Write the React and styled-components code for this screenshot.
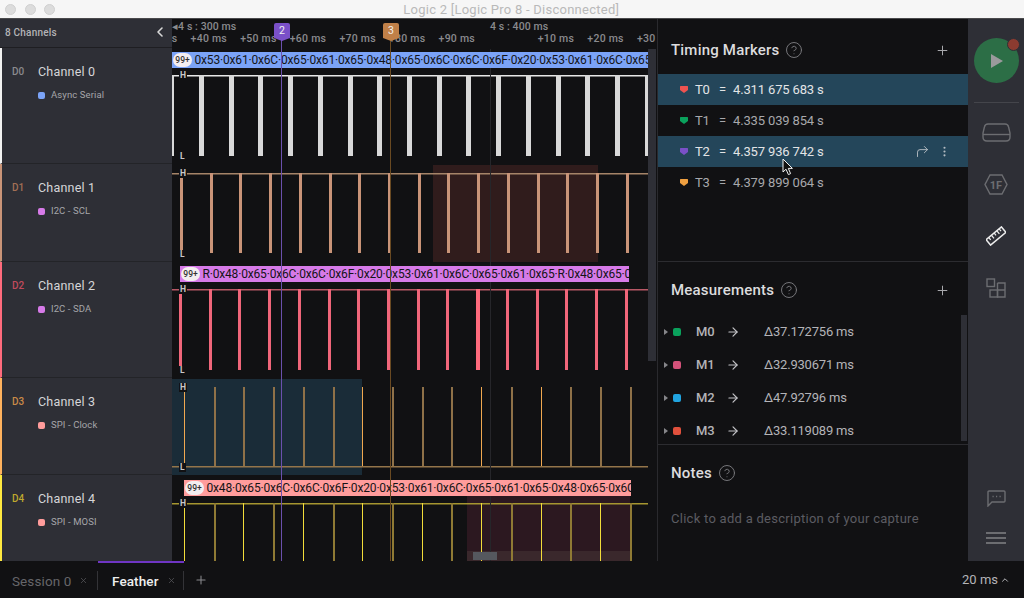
import React from 'react';
import styled, { createGlobalStyle } from 'styled-components';
import { ArrowRight, ChevronLeft, ChevronUp, CircleHelp, CornerUpRight, EllipsisVertical, Plus, X } from 'lucide-react';

const GlobalStyle = createGlobalStyle`
  html, body {
    margin: 0;
    padding: 0;
    background: #111113;
    overflow: hidden;
  }
  * {
    box-sizing: border-box;
  }
`;

const Window = styled.div`
  width: 1024px;
  height: 598px;
  display: flex;
  flex-direction: column;
  font-family: Roboto, "Liberation Sans", sans-serif;
  color: #d6d6d6;
  background: #111113;
  overflow: hidden;
`;

// Title bar
const TitleBar = styled.div`
  height: 19px;
  flex: none;
  background: #f6f6f6;
  border-bottom: 1px solid #4a4a4c;
  display: flex;
  align-items: center;
  padding-left: 5px;
  position: relative;
`;

const TrafficLight = styled.span`
  width: 11px;
  height: 11px;
  margin-right: 8.5px;
  border-radius: 50%;
  background: #dcdcdc;
  border: 1px solid #d0d0d0;
`;

const WindowTitle = styled.div`
  flex: 1;
  padding-right: 65px;
  text-align: center;
  font-size: 13px;
  letter-spacing: 0.25px;
  color: #b9b9b9;
`;

const Main = styled.div`
  flex: 1;
  display: flex;
  min-height: 0;
`;

// Channel column
const ChannelColumn = styled.div`
  width: 172px;
  flex: none;
  display: flex;
  flex-direction: column;
  background: #2e2f36;
`;

const ChannelHeader = styled.div`
  height: 29px;
  flex: none;
  display: flex;
  align-items: center;
  justify-content: space-between;
  padding: 0 4px 2px 5px;
  font-size: 10px;
  font-weight: 500;
  letter-spacing: 0.2px;
  color: #b4b4b6;
  border-bottom: 1px solid #1e1e22;
`;

const ChannelRow = styled.div`
  height: ${({ $height }) => $height}px;
  flex: none;
  border-left: 2px solid ${({ $color }) => $color};
  border-bottom: 1px solid #232428;
  display: grid;
  grid-template-columns: 26px 1fr;
  grid-template-rows: auto auto;
  align-content: start;
  padding: 16px 0 0 10px;
`;

const ChannelTag = styled.span`
  font-size: 10px;
  font-weight: 500;
  line-height: 16px;
  color: ${({ $color }) => $color};
`;

const ChannelName = styled.span`
  font-size: 12.5px;
  line-height: 16px;
  letter-spacing: 0.2px;
  color: #d6d6d8;
`;

const AnalyzerLabel = styled.div`
  grid-column: 2;
  margin-top: 9px;
  display: flex;
  align-items: center;
  gap: 6px;
  font-size: 9.5px;
  line-height: 12px;
  letter-spacing: 0.1px;
  color: #a6a6aa;
`;

const AnalyzerDot = styled.span`
  width: 7px;
  height: 7px;
  border-radius: 2px;
  background: ${({ $color }) => $color};
`;

// Waveform area
const Timeline = styled.div`
  width: 485px;
  flex: none;
  display: flex;
  flex-direction: column;
  position: relative;
  overflow: hidden;
  background: #111113;
`;

const Ruler = styled.div`
  height: 29px;
  flex: none;
  padding-top: 1px;
  overflow: hidden;
  font-size: 10.5px;
  font-weight: 500;
  color: #8a8a8e;
`;

const RulerMajor = styled.div`
  height: 12px;
  line-height: 14px;
  display: flex;
  white-space: nowrap;
  letter-spacing: 0.1px;
`;

const MajorLabel = styled.span`
  width: 318px;
  flex: none;
`;

const RulerMinor = styled.div`
  height: 13px;
  line-height: 13px;
  margin-left: -31px;
  display: flex;
  white-space: nowrap;
  letter-spacing: 0.25px;
`;

const Tick = styled.span`
  width: 49.6px;
  flex: none;
`;

const Lane = styled.div`
  height: ${({ $height }) => $height}px;
  flex: none;
  position: relative;
  padding-top: ${({ $barTop }) => $barTop}px;
  padding-left: ${({ $barLeft }) => $barLeft}px;
`;

const DecoderBar = styled.div`
  width: ${({ $width }) => $width}px;
  height: 16px;
  display: flex;
  align-items: center;
  gap: 2.5px;
  overflow: hidden;
  position: relative;
  z-index: 1;
  white-space: nowrap;
  background: ${({ $color }) => $color};
  color: #141416;
  font-size: 12px;
  letter-spacing: -0.17px;
  padding-left: 1px;
`;

const CountBadge = styled.span`
  flex: none;
  width: 19px;
  height: 14px;
  border-radius: 7px;
  background: #f4eef0;
  font-size: 8.5px;
  font-weight: 500;
  letter-spacing: 0;
  line-height: 14px;
  text-align: center;
  color: #333;
`;

const WaveCanvas = styled.svg`
  position: absolute;
  top: 0;
  left: 0;
`;

const LevelMark = styled.span`
  position: absolute;
  left: 7px;
  top: ${({ $top }) => $top}px;
  padding: 0 1px;
  background: #111113;
  color: #c8c8c8;
  font-size: 8.5px;
  font-weight: 700;
  line-height: 9px;
`;

const MarkerLine = styled.div`
  position: absolute;
  top: 20px;
  bottom: 0;
  left: ${({ $left }) => $left}px;
  width: 1px;
  background: ${({ $color }) => $color};
  z-index: 3;
`;

const MarkerFlag = styled.div`
  position: absolute;
  top: 4px;
  left: ${({ $left }) => $left}px;
  width: 16px;
  height: 15px;
  border-radius: 2px 2px 0 0;
  background: ${({ $color }) => $color};
  color: #f0f0f0;
  font-size: 10.5px;
  line-height: 15px;
  text-align: center;
  z-index: 4;
  &::after {
    content: '';
    position: absolute;
    top: 15px;
    left: 0;
    border-left: 8px solid transparent;
    border-right: 8px solid transparent;
    border-top: 3px solid ${({ $color }) => $color};
  }
`;

const GridLine = styled.div`
  position: absolute;
  top: 30px;
  bottom: 0;
  left: 318px;
  width: 1px;
  background: #26262a;
`;

const WaveScrollbar = styled.div`
  position: absolute;
  left: 476px;
  top: 30px;
  width: 8px;
  height: 312px;
  background: #2e2f36;
  z-index: 2;
`;

const ScrollThumb = styled.div`
  position: absolute;
  left: 301px;
  bottom: 1px;
  width: 24px;
  height: 8px;
  background: #55585e;
  z-index: 2;
`;

// Side panel
const SidePanel = styled.div`
  width: 311px;
  flex: none;
  border-left: 1px solid #2a2a2e;
  display: flex;
  flex-direction: column;
  position: relative;
`;

const PanelSection = styled.section`
  height: ${({ $height }) => ($height ? `${$height}px` : 'auto')};
  flex: ${({ $height }) => ($height ? 'none' : '1')};
  border-bottom: ${({ $height }) => ($height ? '1px solid #2c2c30' : 'none')};
  overflow: hidden;
  position: relative;
`;

const SectionHeader = styled.div`
  height: ${({ $height }) => $height}px;
  display: flex;
  align-items: center;
  gap: 6px;
  padding: ${({ $pad }) => $pad}px 18px 0 13px;
  font-size: 15px;
  font-weight: 500;
  letter-spacing: 0.2px;
  color: #dcdcde;
`;

const HeaderAction = styled.span`
  margin-left: auto;
  display: flex;
  color: #a8a8ac;
`;

const HelpIcon = styled(CircleHelp)`
  color: #77777b;
`;

const MarkerRow = styled.div`
  height: 31px;
  display: flex;
  align-items: center;
  padding: 1px 17px 0 22px;
  font-size: 13px;
  letter-spacing: -0.15px;
  background: ${({ $active }) => ($active ? '#24465a' : 'transparent')};
  color: ${({ $active }) => ($active ? '#e2e4e6' : '#a8a8ac')};
  border-bottom: 1px solid ${({ $active }) => ($active ? '#24465a' : '#111113')};
`;

const MarkerName = styled.span`
  width: 24px;
  margin-left: 7px;
`;

const MarkerEquals = styled.span`
  width: 14px;
`;

const RowActions = styled.span`
  margin-left: auto;
  display: flex;
  align-items: center;
  gap: 8px;
  color: #b4bcc2;
`;

const MeasurementRow = styled.div`
  height: 33px;
  display: flex;
  align-items: center;
  padding-left: 6px;
  font-size: 13px;
  letter-spacing: -0.2px;
  color: #b4b4b8;
`;

const Caret = styled.span`
  width: 0;
  height: 0;
  border-top: 3px solid transparent;
  border-bottom: 3px solid transparent;
  border-left: 4px solid #86868a;
  margin-right: 5px;
`;

const MeasurementSwatch = styled.span`
  width: 8px;
  height: 8px;
  border-radius: 2px;
  background: ${({ $color }) => $color};
  margin-right: 15px;
`;

const MeasurementName = styled.span`
  width: 30px;
  font-weight: 500;
`;

const MeasurementArrow = styled(ArrowRight)`
  width: 14px;
  height: 14px;
  margin-right: 24px;
  color: #c4c4c8;
`;

const PanelScrollbar = styled.div`
  position: absolute;
  right: 1px;
  top: 53px;
  width: 6px;
  height: 126px;
  background: #2e2f36;
`;

const NotesHint = styled.div`
  padding: 10px 13px;
  font-size: 13px;
  line-height: 15px;
  letter-spacing: 0.27px;
  color: #5c5c62;
`;

const Cursor = styled.svg`
  position: absolute;
  left: 124px;
  top: 139px;
  z-index: 5;
`;

// Right rail
const Rail = styled.div`
  flex: 1;
  background: #2e2f36;
  display: flex;
  flex-direction: column;
  align-items: center;
  padding-top: 19px;
`;

const CaptureButton = styled.div`
  width: 45px;
  height: 45px;
  border-radius: 50%;
  background: #2c6e46;
  display: flex;
  align-items: center;
  justify-content: center;
  position: relative;
  flex: none;
`;

const RecordDot = styled.span`
  position: absolute;
  top: 0;
  right: -1px;
  width: 13px;
  height: 13px;
  border-radius: 50%;
  background: #8b3b30;
  border: 1px solid #2e2f36;
`;

const RailDivider = styled.div`
  width: 45px;
  height: 1px;
  margin: 19px 0 3px;
  background: #44454b;
  flex: none;
`;

const RailButton = styled.div`
  height: 52px;
  width: 100%;
  flex: none;
  display: flex;
  align-items: center;
  justify-content: center;
  color: ${({ $active }) => ($active ? '#ececec' : '#6c6d71')};
`;

const RailSpacer = styled.div`
  flex: 1;
`;

const RailFooterButton = styled.div`
  height: 39px;
  flex: none;
  display: flex;
  align-items: center;
  justify-content: center;
  color: #6c6d71;
`;

const RailBottomGap = styled.div`
  height: 4px;
  flex: none;
`;

// Bottom tabs
const TabBar = styled.div`
  height: 37px;
  flex: none;
  display: flex;
  align-items: center;
  background: #111113;
  font-size: 13px;
`;

const Tab = styled.div`
  height: 100%;
  width: ${({ $width }) => $width}px;
  display: flex;
  align-items: center;
  padding-left: ${({ $pad }) => $pad}px;
  gap: 8px;
  font-size: 13.5px;
  letter-spacing: 0.1px;
  color: ${({ $active }) => ($active ? '#eeeeee' : '#66666a')};
  font-weight: ${({ $active }) => ($active ? 500 : 400)};
  position: relative;
  border-top: 2px solid ${({ $active }) => ($active ? '#6f35c4' : 'transparent')};
  &::after {
    content: '';
    position: absolute;
    right: 0;
    top: 8px;
    height: 19px;
    width: 1px;
    background: #333337;
  }
`;

const TabClose = styled(X)`
  color: #55555a;
`;

const AddTab = styled(Plus)`
  margin-left: 10px;
  color: #8a8a8e;
`;

const Resolution = styled.div`
  margin-left: auto;
  padding-right: 14px;
  display: flex;
  align-items: center;
  gap: 2px;
  color: #b4b4b8;
`;

const pulses = (start, count, step = 29.72) =>
  Array.from({ length: count }, (_, i) => start + i * step);

const channels = [
  { id: 'D0', name: 'Channel 0', strip: '#f2f2f2', tag: '#8a8a8e', analyzer: 'Async Serial', dot: '#7ba3f7', height: 116 },
  { id: 'D1', name: 'Channel 1', strip: '#c99478', tag: '#a36f55', analyzer: 'I2C - SCL', dot: '#d67ae8', height: 98 },
  { id: 'D2', name: 'Channel 2', strip: '#ff6b7d', tag: '#c04a5c', analyzer: 'I2C - SDA', dot: '#d67ae8', height: 116 },
  { id: 'D3', name: 'Channel 3', strip: '#ffb25e', tag: '#c98a48', analyzer: 'SPI - Clock', dot: '#ff9c9c', height: 97 },
  { id: 'D4', name: 'Channel 4', strip: '#ffe940', tag: '#bfa82e', analyzer: 'SPI - MOSI', dot: '#ff9c9c', height: 87 },
];

const serialText = '0x53·0x61·0x6C·0x65·0x61·0x65·0x48·0x65·0x6C·0x6C·0x6F·0x20·0x53·0x61·0x6C·0x65·0x61';
const i2cText = 'R·0x48·0x65·0x6C·0x6C·0x6F·0x20·0x53·0x61·0x6C·0x65·0x61·0x65·R·0x48·0x65·0x6C';
const spiText = '0x48·0x65·0x6C·0x6C·0x6F·0x20·0x53·0x61·0x6C·0x65·0x61·0x65·0x48·0x65·0x6C';

// Waveform drawing for each lane, coordinates are local to the lane
const LaneWave = ({ height, level, low, edges, width, color, lineColor, regions = [], brightAt = [], brightColor, brightWidth, firstWidth }) => (
  <WaveCanvas width="485" height={height}>
    {regions.map((region) => (
      <rect key={region.y} x={region.x} y={region.y} width={region.w} height={region.h} fill={region.fill} />
    ))}
    <rect x="0" y={level} width="476" height="1.5" fill={lineColor} />
    {edges.map((x, i) => {
      const bright = brightAt.includes(i);
      const edgeWidth = i === 0 && firstWidth ? firstWidth : bright && brightWidth ? brightWidth : width;
      return (
        <rect
          key={x}
          x={Math.round(x)}
          y={Math.min(level, low)}
          width={edgeWidth}
          height={Math.abs(low - level)}
          fill={bright ? brightColor : color}
        />
      );
    })}
  </WaveCanvas>
);

const MarkerShield = ({ color }) => (
  <svg width="8" height="7" viewBox="0 0 8 7">
    <path d="M0 0.5 Q0 0 0.5 0 H7.5 Q8 0 8 0.5 V4 L4 7 L0 4 Z" fill={color} />
  </svg>
);

const DeviceIcon = () => (
  <svg width="29" height="19" viewBox="0 0 29 19" fill="none" stroke="currentColor" strokeWidth="1.4">
    <path d="M6 1 H23 Q26 1 26.6 4 L28 10 V14 Q28 18 24 18 H5 Q1 18 1 14 V10 L2.4 4 Q3 1 6 1 Z" />
    <path d="M1 11.5 H28" />
  </svg>
);

const FilterIcon = () => (
  <svg width="24" height="21" viewBox="0 0 24 21" fill="none" stroke="currentColor" strokeWidth="1.4">
    <path d="M6 1 H18 L23 10.5 L18 20 H6 L1 10.5 Z" />
    <text x="12" y="14.5" fontSize="11" fontWeight="700" textAnchor="middle" fill="currentColor" stroke="none" fontFamily="Roboto, sans-serif">1F</text>
  </svg>
);

const RulerIcon = () => (
  <svg width="20" height="20" viewBox="0 0 20 20" fill="none" stroke="currentColor" strokeWidth="1.5">
    <g transform="rotate(-40 10 10)">
      <rect x="0" y="6.5" width="20" height="7" />
      <path d="M3.5 6.5 V9.5 M7 6.5 V10.5 M10.5 6.5 V9.5 M14 6.5 V10.5 M17 6.5 V9.5" strokeWidth="1.2" />
    </g>
  </svg>
);

const LayoutIcon = () => (
  <svg width="20" height="20" viewBox="0 0 20 20" fill="none" stroke="currentColor" strokeWidth="1.4">
    <rect x="1" y="1" width="7.5" height="7.5" />
    <rect x="4" y="12" width="7.5" height="7" />
    <path d="M11.5 5 H19 V19 H11.5 V5 M11.5 12 H19" />
  </svg>
);

const ChatIcon = () => (
  <svg width="19" height="17" viewBox="0 0 19 17" fill="none" stroke="currentColor" strokeWidth="1.4">
    <path d="M2 1 H17 Q18 1 18 2 V11 Q18 12 17 12 H5 L1 16 V2 Q1 1 2 1 Z" />
    <path d="M5.5 6.5 H6.7 M9 6.5 H10.2 M12.5 6.5 H13.7" strokeWidth="1.6" />
  </svg>
);

const MenuIcon = () => (
  <svg width="20" height="12" viewBox="0 0 20 12" fill="currentColor">
    <rect y="0" width="20" height="2" />
    <rect y="5" width="20" height="2" />
    <rect y="10" width="20" height="2" />
  </svg>
);

const App = () => (
  <Window>
    <GlobalStyle />
    <TitleBar>
      <TrafficLight />
      <TrafficLight />
      <TrafficLight />
      <WindowTitle>Logic 2 [Logic Pro 8 - Disconnected]</WindowTitle>
    </TitleBar>

    <Main>
      <ChannelColumn>
        <ChannelHeader>
          8 Channels
          <ChevronLeft size={16} color="#d8d8d8" strokeWidth={2.4} />
        </ChannelHeader>
        {channels.map((channel) => (
          <ChannelRow key={channel.id} $height={channel.height} $color={channel.strip}>
            <ChannelTag $color={channel.tag}>{channel.id}</ChannelTag>
            <ChannelName>{channel.name}</ChannelName>
            <AnalyzerLabel>
              <AnalyzerDot $color={channel.dot} />
              {channel.analyzer}
            </AnalyzerLabel>
          </ChannelRow>
        ))}
      </ChannelColumn>

      <Timeline>
        <Ruler>
          <RulerMajor>
            <MajorLabel>◂4 s : 300 ms</MajorLabel>
            <span>4 s : 400 ms</span>
          </RulerMajor>
          <RulerMinor>
            {['+30 ms', '+40 ms', '+50 ms', '+60 ms', '+70 ms', '+80 ms', '+90 ms', '', '+10 ms', '+20 ms', '+30 ms'].map((label, i) => (
              <Tick key={i}>{label}</Tick>
            ))}
          </RulerMinor>
        </Ruler>

        <Lane $height={116} $barTop={4} $barLeft={0}>
          <LaneWave
            height={116}
            level={27}
            low={108}
            edges={[0, ...pulses(27, 16)]}
            width={5}
            firstWidth={2}
            color="#d9d9d9"
            lineColor="#e8e8e8"
          />
          <LevelMark $top={23}>H</LevelMark>
          <LevelMark $top={104}>L</LevelMark>
          <DecoderBar $width={476} $color="#7ba3f7">
            <CountBadge>99+</CountBadge>
            {serialText}
          </DecoderBar>
        </Lane>

        <Lane $height={98}>
          <LaneWave
            height={98}
            level={9}
            low={89}
            edges={pulses(8, 16)}
            width={3}
            color="#c99478"
            lineColor="#a58468"
            regions={[{ x: 261, y: 1, w: 165, h: 97, fill: '#301c1c' }]}
          />
          <LevelMark $top={5}>H</LevelMark>
          <LevelMark $top={86}>L</LevelMark>
        </Lane>

        <Lane $height={116} $barTop={4} $barLeft={8}>
          <LaneWave
            height={116}
            level={27}
            low={108}
            edges={pulses(7, 16)}
            width={3}
            color="#f0667a"
            lineColor="#b85866"
            brightAt={[10]}
            brightColor="#ff6b7d"
            brightWidth={4}
          />
          <LevelMark $top={23}>H</LevelMark>
          <LevelMark $top={104}>L</LevelMark>
          <DecoderBar $width={449} $color="#d67ae8">
            <CountBadge>99+</CountBadge>
            {i2cText}
          </DecoderBar>
        </Lane>

        <Lane $height={97}>
          <LaneWave
            height={97}
            level={88}
            low={9}
            edges={pulses(12, 16)}
            width={2}
            color="#8f7148"
            lineColor="#94754a"
            brightAt={[0, 6, 10, 12]}
            brightColor="#f0a850"
            brightWidth={1}
            regions={[{ x: 0, y: 1, w: 190, h: 96, fill: '#1a2c38' }]}
          />
          <LevelMark $top={5}>H</LevelMark>
          <LevelMark $top={85}>L</LevelMark>
        </Lane>

        <Lane $height={86} $barTop={5} $barLeft={12}>
          <LaneWave
            height={86}
            level={28}
            low={86}
            edges={pulses(12, 16)}
            width={2}
            color="#8f7a34"
            lineColor="#a69630"
            brightAt={[0, 2, 4, 6, 8, 10, 12, 14]}
            brightColor="#f2dc3a"
            brightWidth={1}
            regions={[
              { x: 295, y: 20, w: 163, h: 56, fill: '#2c1820' },
              { x: 295, y: 76, w: 163, h: 10, fill: '#3a282c' },
            ]}
          />
          <LevelMark $top={24}>H</LevelMark>
          <DecoderBar $width={447} $color="#ff9c9c">
            <CountBadge>99+</CountBadge>
            {spiText}
          </DecoderBar>
          <ScrollThumb />
        </Lane>

        <GridLine />
        <WaveScrollbar />
        <MarkerLine $left={109} $color="#6b50ad" />
        <MarkerLine $left={218} $color="#6a4a22" />
        <MarkerFlag $left={102} $color="#7a50c8">2</MarkerFlag>
        <MarkerFlag $left={211} $color="#c08048">3</MarkerFlag>
      </Timeline>

      <SidePanel>
        <PanelSection $height={243}>
          <SectionHeader $height={55} $pad={7}>
            Timing Markers
            <HelpIcon size={18} strokeWidth={1.3} />
            <HeaderAction><Plus size={15} strokeWidth={1.6} /></HeaderAction>
          </SectionHeader>
          <MarkerRow $active>
            <MarkerShield color="#ef5350" />
            <MarkerName>T0</MarkerName>
            <MarkerEquals>=</MarkerEquals>
            4.311 675 683 s
          </MarkerRow>
          <MarkerRow>
            <MarkerShield color="#0aa15c" />
            <MarkerName>T1</MarkerName>
            <MarkerEquals>=</MarkerEquals>
            4.335 039 854 s
          </MarkerRow>
          <MarkerRow $active>
            <MarkerShield color="#7a50c8" />
            <MarkerName>T2</MarkerName>
            <MarkerEquals>=</MarkerEquals>
            4.357 936 742 s
            <RowActions>
              <CornerUpRight size={15} strokeWidth={1.5} />
              <EllipsisVertical size={13} strokeWidth={2} />
            </RowActions>
          </MarkerRow>
          <MarkerRow>
            <MarkerShield color="#f0a040" />
            <MarkerName>T3</MarkerName>
            <MarkerEquals>=</MarkerEquals>
            4.379 899 064 s
          </MarkerRow>
        </PanelSection>

        <PanelSection $height={183}>
          <SectionHeader $height={53} $pad={3}>
            Measurements
            <HelpIcon size={18} strokeWidth={1.3} />
            <HeaderAction><Plus size={15} strokeWidth={1.6} /></HeaderAction>
          </SectionHeader>
          <MeasurementRow>
            <Caret />
            <MeasurementSwatch $color="#0aa15c" />
            <MeasurementName>M0</MeasurementName>
            <MeasurementArrow />
            Δ37.172756 ms
          </MeasurementRow>
          <MeasurementRow>
            <Caret />
            <MeasurementSwatch $color="#d4527a" />
            <MeasurementName>M1</MeasurementName>
            <MeasurementArrow />
            Δ32.930671 ms
          </MeasurementRow>
          <MeasurementRow>
            <Caret />
            <MeasurementSwatch $color="#21a4e0" />
            <MeasurementName>M2</MeasurementName>
            <MeasurementArrow />
            Δ47.92796 ms
          </MeasurementRow>
          <MeasurementRow>
            <Caret />
            <MeasurementSwatch $color="#e0503c" />
            <MeasurementName>M3</MeasurementName>
            <MeasurementArrow />
            Δ33.119089 ms
          </MeasurementRow>
          <PanelScrollbar />
        </PanelSection>

        <PanelSection>
          <SectionHeader $height={56} $pad={0}>
            Notes
            <HelpIcon size={18} strokeWidth={1.3} />
          </SectionHeader>
          <NotesHint>Click to add a description of your capture</NotesHint>
        </PanelSection>

        <Cursor width="13" height="18" viewBox="0 0 13 18">
          <path d="M1 1 V14 L4 11.2 L6.4 16.6 L8.6 15.6 L6.3 10.4 H10.4 Z" fill="#111" stroke="#f2f2f2" strokeWidth="1" />
        </Cursor>
      </SidePanel>

      <Rail>
        <CaptureButton>
          <svg width="16" height="16" viewBox="0 0 16 16">
            <path d="M3 1 L15 8 L3 15 Z" fill="#9a9a9c" />
          </svg>
          <RecordDot />
        </CaptureButton>
        <RailDivider />
        <RailButton><DeviceIcon /></RailButton>
        <RailButton><FilterIcon /></RailButton>
        <RailButton $active><RulerIcon /></RailButton>
        <RailButton><LayoutIcon /></RailButton>
        <RailSpacer />
        <RailFooterButton><ChatIcon /></RailFooterButton>
        <RailFooterButton><MenuIcon /></RailFooterButton>
        <RailBottomGap />
      </Rail>
    </Main>

    <TabBar>
      <Tab $width={98} $pad={12}>
        Session 0
        <TabClose size={9} />
      </Tab>
      <Tab $width={86} $pad={14} $active>
        Feather
        <TabClose size={9} />
      </Tab>
      <AddTab size={14} strokeWidth={1.8} />
      <Resolution>
        20 ms
        <ChevronUp size={10} strokeWidth={2.4} />
      </Resolution>
    </TabBar>
  </Window>
);

export default App;
